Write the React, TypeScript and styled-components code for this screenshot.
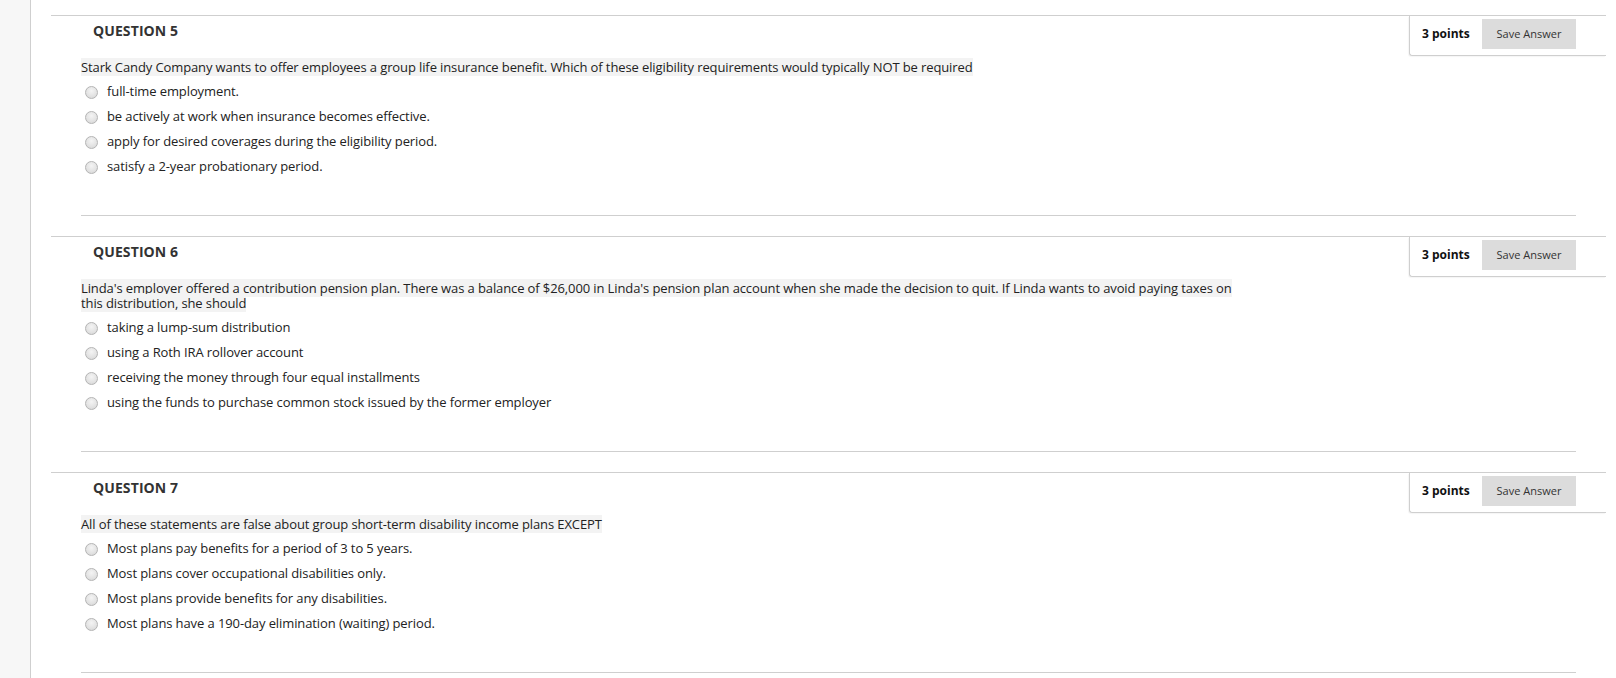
import React from "react";
import styled, { createGlobalStyle } from "styled-components";

const GlobalStyle = createGlobalStyle`
  html, body {
    margin: 0;
    padding: 0;
    background: #ffffff;
  }
  body {
    font-family: "Open Sans", "Liberation Sans", sans-serif;
    color: #222;
  }
  * { box-sizing: border-box; }
`;

const Page = styled.div`
  display: flex;
  min-height: 678px;
  overflow: hidden;
`;

const Sidebar = styled.div`
  flex: 0 0 31px;
  background: #f7f7f7;
  border-right: 1px solid #cfcfcf;
`;

const Main = styled.main`
  flex: 1;
  padding: 15px 10px 0 20px;
`;

const QuestionList = styled.ol`
  list-style: none;
  margin: 0;
  padding: 0;
`;

const QuestionItem = styled.li`
  border-top: 1px solid #cfcfcf;
  margin-bottom: 20px;
`;

const Header = styled.div`
  display: flex;
  justify-content: space-between;
  align-items: flex-start;
  height: 40px;
`;

const Title = styled.h3`
  margin: 0;
  padding: 5px 0 0 42px;
  font-size: 14px;
  line-height: 19px;
  font-weight: 700;
  color: #333;
  letter-spacing: 0.1px;
`;

const PointsBox = styled.div`
  display: flex;
  align-items: center;
  height: 40px;
  padding: 2px 30px 6px 12px;
  border-left: 1px solid #cfcfcf;
  border-bottom: 1px solid #cfcfcf;
  border-bottom-left-radius: 3px;
  box-shadow: -1px 1px 1px rgba(0, 0, 0, 0.04);
`;

const Points = styled.span`
  font-size: 12px;
  font-weight: 700;
  color: #111;
  width: 60px;
`;

const SaveButton = styled.button`
  width: 94px;
  height: 30px;
  border: none;
  border-radius: 0;
  background: #dcdcdc;
  color: #333;
  font-family: "Open Sans", "Liberation Sans", sans-serif;
  font-size: 11px;
  padding: 0;
  cursor: pointer;
`;

const Body = styled.div`
  margin: 0 30px;
  padding: 4px 0 37px;
  border-bottom: 1px solid #cfcfcf;
`;

const Prompt = styled.div`
  max-width: 1162px;
  font-size: 13px;
  line-height: 15px;
  letter-spacing: -0.11px;
  color: #222;
`;

const PromptText = styled.span`
  background: #f3f3f3;
`;

const Options = styled.ul`
  list-style: none;
  margin: 3px 0 0;
  padding: 0;
`;

const Option = styled.li`
  display: flex;
  align-items: center;
  height: 25px;
  font-size: 13px;
  letter-spacing: -0.1px;
  color: #222;
`;

const Radio = styled.span`
  flex: 0 0 13px;
  width: 13px;
  height: 13px;
  margin: 4px 9px 0 4px;
  border-radius: 50%;
  border: 1px solid #b4b4b4;
  background: radial-gradient(circle at 50% 35%, #f4f4f4 0%, #e2e2e2 60%, #d2d2d2 100%);
`;

type Question = {
  n: number;
  prompt: string;
  options: string[];
};

const questions: Question[] = [
  {
    n: 5,
    prompt:
      "Stark Candy Company wants to offer employees a group life insurance benefit. Which of these eligibility requirements would typically NOT be required",
    options: [
      "full-time employment.",
      "be actively at work when insurance becomes effective.",
      "apply for desired coverages during the eligibility period.",
      "satisfy a 2-year probationary period.",
    ],
  },
  {
    n: 6,
    prompt:
      "Linda's employer offered a contribution pension plan. There was a balance of $26,000 in Linda's pension plan account when she made the decision to quit. If Linda wants to avoid paying taxes on this distribution, she should",
    options: [
      "taking a lump-sum distribution",
      "using a Roth IRA rollover account",
      "receiving the money through four equal installments",
      "using the funds to purchase common stock issued by the former employer",
    ],
  },
  {
    n: 7,
    prompt:
      "All of these statements are false about group short-term disability income plans EXCEPT",
    options: [
      "Most plans pay benefits for a period of 3 to 5 years.",
      "Most plans cover occupational disabilities only.",
      "Most plans provide benefits for any disabilities.",
      "Most plans have a 190-day elimination (waiting) period.",
    ],
  },
];

export default function App() {
  return (
    <>
      <GlobalStyle />
      <Page>
        <Sidebar />
        <Main>
          <QuestionList>
            {questions.map((q) => (
              <QuestionItem key={q.n}>
                <Header>
                  <Title>QUESTION {q.n}</Title>
                  <PointsBox>
                    <Points>3 points</Points>
                    <SaveButton type="button">Save Answer</SaveButton>
                  </PointsBox>
                </Header>
                <Body>
                  <Prompt>
                    <PromptText>{q.prompt}</PromptText>
                  </Prompt>
                  <Options>
                    {q.options.map((o) => (
                      <Option key={o}>
                        <Radio />
                        <span>{o}</span>
                      </Option>
                    ))}
                  </Options>
                </Body>
              </QuestionItem>
            ))}
          </QuestionList>
        </Main>
      </Page>
    </>
  );
}
